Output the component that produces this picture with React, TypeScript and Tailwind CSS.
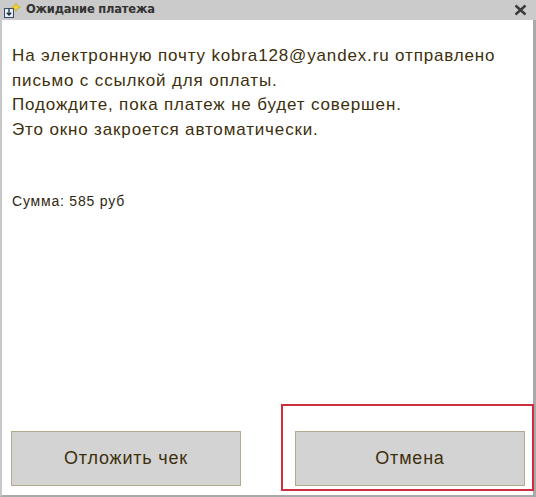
export default function App() {
  return (
    <div className="relative w-[536px] h-[497px] bg-white flex flex-col font-['Liberation_Sans',Arial,sans-serif] overflow-hidden">
      {/* Title bar */}
      <div className="h-[20px] bg-[#cbcbcb] flex items-center pl-[3px] pr-[9px] shrink-0">
        <svg width="18" height="17" viewBox="0 0 18 17" className="shrink-0">
          <rect x="1.5" y="6.5" width="9" height="9" fill="#e8eef6" stroke="#3a4a66" />
          <path d="M6 7v6M3.8 10.8L6 13l2.2-2.2" stroke="#1a2a44" strokeWidth="1.3" fill="none" />
          <path d="M13 1l1.3 3 3 1.3-3 1.3-1.3 3-1.3-3-3-1.3 3-1.3z" fill="#f7d634" stroke="#c9a40c" strokeWidth="0.6" />
        </svg>
        <span className="ml-[5px] text-[11.5px] font-bold text-[#333333] font-['DejaVu_Sans',sans-serif] tracking-[-0.2px]">
          Ожидание платежа
        </span>
        <div className="flex-1" />
        <svg width="13" height="12" viewBox="0 0 13 12">
          <path d="M1.5 1.5l10 9M11.5 1.5l-10 9" stroke="#3a3a3a" strokeWidth="2.4" />
        </svg>
      </div>

      {/* Body */}
      <div className="flex-1 flex flex-col border-l-2 border-r-[3px] border-b-2 border-l-[#c8c8c8] border-r-[#a9a9a9] border-b-[#a9a9a9]">
        <div className="pl-[10px] pt-[24px] text-[17px] leading-[24.5px] tracking-[0.85px] text-[#3d2f0c]">
          <p>На электронную почту kobra128@yandex.ru отправлено</p>
          <p>письмо с ссылкой для оплаты.</p>
          <p>Подождите, пока платеж не будет совершен.</p>
          <p>Это окно закроется автоматически.</p>
        </div>

        <p className="pl-[10px] mt-[49px] text-[14px] leading-[20px] tracking-[0.8px] text-[#2f2710]">Сумма: 585 руб</p>

        <div className="flex-1" />

        <div className="flex justify-between pl-[9px] pr-[8px] pb-[9px]">
          <button className="w-[230px] h-[55px] bg-[#d3d3d3] border border-[#b4a98c] text-[18px] tracking-[0.8px] text-[#3d2f0c]">
            Отложить чек
          </button>
          <button className="w-[230px] h-[55px] bg-[#d3d3d3] border border-[#b4a98c] text-[18px] tracking-[0.8px] text-[#3d2f0c]">
            Отмена
          </button>
        </div>
      </div>

      {/* Highlight annotation */}
      <div className="absolute left-[281px] top-[404px] w-[253px] h-[87px] border-2 border-[#cf2f3c] pointer-events-none" />
    </div>
  );
}
